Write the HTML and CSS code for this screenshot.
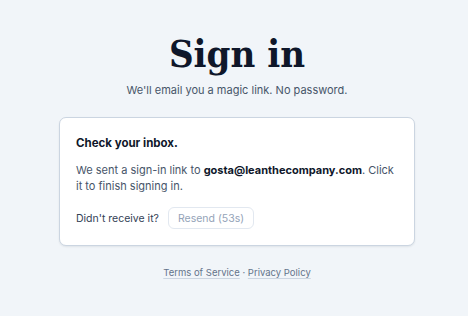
FILE: index.html
```html
<!DOCTYPE html>
<html>
<head>
<meta charset="utf-8">
<link rel="stylesheet" href="styles.css">
</head>
<body>
<main class="page">
  <h1 class="title">Sign in</h1>
  <p class="subtitle">We'll email you a magic link. No password.</p>
  <section class="card">
    <h2 class="card-title">Check your inbox.</h2>
    <p class="card-text">We sent a sign-in link to <strong>gosta@leanthecompany.com</strong>. Click it to finish signing in.</p>
    <div class="resend-row">
      <span class="resend-label">Didn't receive it?</span>
      <button class="resend-btn" disabled>Resend (53s)</button>
    </div>
  </section>
  <footer class="footer">
    <a href="#" class="footer-link">Terms of Service</a> · <a href="#" class="footer-link">Privacy Policy</a>
  </footer>
</main>
</body>
</html>
```
FILE: styles.css
```css
* { box-sizing: border-box; }
html, body { margin: 0; padding: 0; }
body {
  background: #f1f5f9;
  font-family: Inter, "Noto Sans", sans-serif;
  color: #0f172a;
  width: 468px;
  height: 316px;
  overflow: hidden;
}
.page {
  display: flex;
  flex-direction: column;
  align-items: center;
  padding: 30px 0 0 6px;
}
.title {
  margin: 0;
  font-family: "DejaVu Serif Condensed", "DejaVu Serif", serif;
  font-stretch: condensed;
  font-weight: 700;
  font-size: 38px;
  line-height: 48px;
  color: #0f172a;
}
.subtitle {
  margin: 4px 0 0;
  font-size: 11px;
  line-height: 16px;
  color: #475569;
}
.card {
  margin-top: 19px;
  width: 356px;
  background: #fff;
  border: 1px solid #cbd5e1;
  border-radius: 7px;
  box-shadow: 0 1px 2px rgba(15, 23, 42, 0.08);
  padding: 16px 16px 16px;
}
.card-title {
  margin: 0;
  font-size: 11.5px;
  line-height: 18px;
  font-weight: 700;
  color: #0f172a;
}
.card-text {
  margin: 10px 0 0;
  font-size: 11px;
  line-height: 16px;
  color: #475569;
}
.card-text strong {
  color: #0f172a;
  font-weight: 700;
}
.resend-row {
  margin-top: 13px;
  display: flex;
  align-items: center;
  gap: 9px;
}
.resend-label {
  font-size: 10.5px;
  color: #334155;
}
.resend-btn {
  font-family: inherit;
  font-size: 10.5px;
  color: #94a3b8;
  background: #fff;
  border: 1px solid #e2e8f0;
  border-radius: 6px;
  padding: 3px 9px;
  height: 22px;
}
.footer {
  margin-top: 21px;
  font-size: 9.5px;
  color: #64748b;
}
.footer-link {
  color: #64748b;
  text-decoration: underline;
  text-decoration-color: #cbd5e1;
  text-underline-offset: 2px;
}
```
